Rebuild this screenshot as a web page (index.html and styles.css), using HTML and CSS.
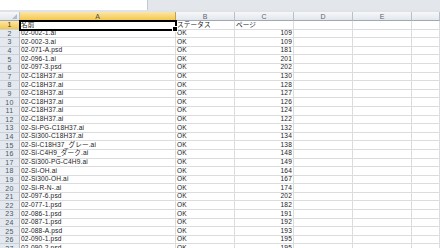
FILE: index.html
```html
<!DOCTYPE html>
<html>
<head>
<meta charset="utf-8" />
<link rel="stylesheet" href="styles.css">
</head>
<body>
<div class="topbar">
  <div class="namebox"></div>
  <div class="fill"></div>
</div>
<div class="gap"></div>
<div class="sheet">
  <div class="hd corner"><span class="tri"></span></div>
  <div class="hd sel">A</div>
  <div class="hd">B</div>
  <div class="hd">C</div>
  <div class="hd">D</div>
  <div class="hd">E</div>
  <div class="hd"></div>

  <div class="rh sel">1</div><div class="c active">名前</div><div class="c">ステータス</div><div class="c">ページ</div><div class="c"></div><div class="c"></div><div class="c"></div>
  <div class="rh">2</div><div class="c">02-002-1.ai</div><div class="c">OK</div><div class="c n">109</div><div class="c"></div><div class="c"></div><div class="c"></div>
  <div class="rh">3</div><div class="c">02-002-3.ai</div><div class="c">OK</div><div class="c n">109</div><div class="c"></div><div class="c"></div><div class="c"></div>
  <div class="rh">4</div><div class="c">02-071-A.psd</div><div class="c">OK</div><div class="c n">181</div><div class="c"></div><div class="c"></div><div class="c"></div>
  <div class="rh">5</div><div class="c">02-096-1.ai</div><div class="c">OK</div><div class="c n">201</div><div class="c"></div><div class="c"></div><div class="c"></div>
  <div class="rh">6</div><div class="c">02-097-3.psd</div><div class="c">OK</div><div class="c n">202</div><div class="c"></div><div class="c"></div><div class="c"></div>
  <div class="rh">7</div><div class="c">02-C18H37.ai</div><div class="c">OK</div><div class="c n">130</div><div class="c"></div><div class="c"></div><div class="c"></div>
  <div class="rh">8</div><div class="c">02-C18H37.ai</div><div class="c">OK</div><div class="c n">128</div><div class="c"></div><div class="c"></div><div class="c"></div>
  <div class="rh">9</div><div class="c">02-C18H37.ai</div><div class="c">OK</div><div class="c n">127</div><div class="c"></div><div class="c"></div><div class="c"></div>
  <div class="rh">10</div><div class="c">02-C18H37.ai</div><div class="c">OK</div><div class="c n">126</div><div class="c"></div><div class="c"></div><div class="c"></div>
  <div class="rh">11</div><div class="c">02-C18H37.ai</div><div class="c">OK</div><div class="c n">124</div><div class="c"></div><div class="c"></div><div class="c"></div>
  <div class="rh">12</div><div class="c">02-C18H37.ai</div><div class="c">OK</div><div class="c n">122</div><div class="c"></div><div class="c"></div><div class="c"></div>
  <div class="rh">13</div><div class="c">02-Si-PG-C18H37.ai</div><div class="c">OK</div><div class="c n">132</div><div class="c"></div><div class="c"></div><div class="c"></div>
  <div class="rh">14</div><div class="c">02-Si300-C18H37.ai</div><div class="c">OK</div><div class="c n">134</div><div class="c"></div><div class="c"></div><div class="c"></div>
  <div class="rh">15</div><div class="c">02-Si-C18H37_グレー.ai</div><div class="c">OK</div><div class="c n">138</div><div class="c"></div><div class="c"></div><div class="c"></div>
  <div class="rh">16</div><div class="c">02-Si-C4H9_ダーク.ai</div><div class="c">OK</div><div class="c n">148</div><div class="c"></div><div class="c"></div><div class="c"></div>
  <div class="rh">17</div><div class="c">02-Si300-PG-C4H9.ai</div><div class="c">OK</div><div class="c n">149</div><div class="c"></div><div class="c"></div><div class="c"></div>
  <div class="rh">18</div><div class="c">02-Si-OH.ai</div><div class="c">OK</div><div class="c n">164</div><div class="c"></div><div class="c"></div><div class="c"></div>
  <div class="rh">19</div><div class="c">02-Si300-OH.ai</div><div class="c">OK</div><div class="c n">167</div><div class="c"></div><div class="c"></div><div class="c"></div>
  <div class="rh">20</div><div class="c">02-Si-R-N-.ai</div><div class="c">OK</div><div class="c n">174</div><div class="c"></div><div class="c"></div><div class="c"></div>
  <div class="rh">21</div><div class="c">02-097-6.psd</div><div class="c">OK</div><div class="c n">202</div><div class="c"></div><div class="c"></div><div class="c"></div>
  <div class="rh">22</div><div class="c">02-077-1.psd</div><div class="c">OK</div><div class="c n">182</div><div class="c"></div><div class="c"></div><div class="c"></div>
  <div class="rh">23</div><div class="c">02-086-1.psd</div><div class="c">OK</div><div class="c n">191</div><div class="c"></div><div class="c"></div><div class="c"></div>
  <div class="rh">24</div><div class="c">02-087-1.psd</div><div class="c">OK</div><div class="c n">192</div><div class="c"></div><div class="c"></div><div class="c"></div>
  <div class="rh">25</div><div class="c">02-088-A.psd</div><div class="c">OK</div><div class="c n">193</div><div class="c"></div><div class="c"></div><div class="c"></div>
  <div class="rh">26</div><div class="c">02-090-1.psd</div><div class="c">OK</div><div class="c n">195</div><div class="c"></div><div class="c"></div><div class="c"></div>
  <div class="rh">27</div><div class="c">02-090-2.psd</div><div class="c">OK</div><div class="c n">195</div><div class="c"></div><div class="c"></div><div class="c"></div>
</div>
</body>
</html>
```
FILE: styles.css
```css
:root {--grid: #dadcdd; --hd-line: #b9c0c9; --hd-text: #4d5766; --row-h: 8.6px;}
html, body {margin: 0; padding: 0; overflow: hidden; background: #fff;}
body {width: 440px; height: 248px; font-family: "Liberation Sans", "Noto Sans CJK JP", sans-serif; font-size: 6.6px; letter-spacing: 0.15px; color: #1a1a1a;}
.topbar {display: flex; height: 10px; background: #e3e7ec;}
.namebox {width: 147px; background: #fff; border-right: 1px solid #c4cad2;}
.fill {flex: 1 1 auto;}
.gap {height: 2px; background: #dfe3e8;}
.sheet {display: grid; grid-template-columns: 20px 156px 59px 59px 59px 59px 1fr; grid-template-rows: 9px; grid-auto-rows: var(--row-h);}
.hd {display: flex; align-items: center; justify-content: center; background: linear-gradient(#f6f7f9, #e3e7ec); border-right: 1px solid var(--hd-line); border-bottom: 1px solid #9fa8b4; color: #5b6472; font-size: 7px; line-height: 1; letter-spacing: 0; box-sizing: border-box;}
.hd.sel {background: linear-gradient(#fbe6a6, #f3c84e); color: #4d4d4d; border-right-color: #c2a050;}
.corner {position: relative;}
.tri {position: absolute; right: 2px; bottom: 1px; width: 0; height: 0; border-left: 5px solid transparent; border-bottom: 5px solid #b4bcc6;}
.rh {display: flex; align-items: center; justify-content: center; background: #e4e9ef; border-right: 1px solid var(--hd-line); border-bottom: 1px solid #cbd1d8; color: var(--hd-text); font-size: 7px; line-height: 1; letter-spacing: 0.3px; box-sizing: border-box;}
.rh.sel {background: linear-gradient(#fbe6a6, #f3c84e); color: #333;}
.c {border-right: 1px solid var(--grid); border-bottom: 1px solid var(--grid); box-sizing: border-box; padding: 0 1px; white-space: nowrap; overflow: visible; line-height: var(--row-h); display: flex; align-items: center;}
.c.n {justify-content: flex-end;}
.c.active {position: relative; outline: 2px solid #000; outline-offset: -1px; z-index: 1;}
.c.active::after {content: ""; position: absolute; right: -3px; bottom: -3px; width: 4px; height: 4px; background: #000; border: 1px solid #fff;}
```
